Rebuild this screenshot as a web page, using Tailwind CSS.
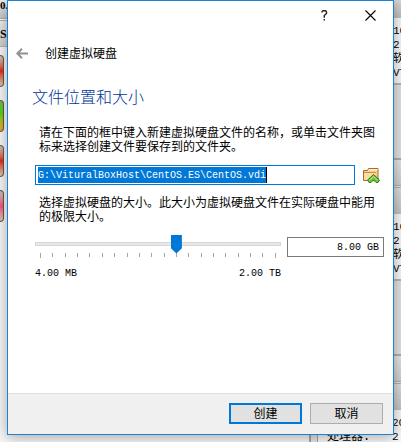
<!DOCTYPE html>
<html lang="zh-CN">
<head>
<meta charset="utf-8">
<meta name="viewport" content="width=device-width, initial-scale=1">
<title>创建虚拟硬盘</title>
<script src="https://cdn.jsdelivr.net/npm/@tailwindcss/browser@4"></script>
</head>
<body class="relative flex min-h-screen overflow-hidden bg-[#f8f8f8] text-xs leading-[14px] text-black font-['Liberation_Sans','Noto_Sans_CJK_SC',sans-serif]">

<!-- Manager window behind the dialog -->
<div class="absolute inset-0 flex justify-between overflow-hidden" aria-hidden="true">
  <div class="flex w-10 flex-col">
    <div class="h-[18px] overflow-hidden bg-linear-to-b from-[#f0f0f0] to-[#c8c8c8] font-['Liberation_Serif'] text-[11px] font-bold leading-[10px]"><span>0.</span></div>
    <div class="h-[3px] border-y border-[#b0b0b0] bg-white"></div>
    <div class="mb-2 h-[26px] border-b border-[#b8b8b8] bg-linear-to-b from-[#f0f0f0] to-[#d0d0d0] pt-1.5 font-['Liberation_Serif'] font-bold">Sn</div>
    <div class="flex flex-col gap-[13px]">
      <div class="h-8 w-1 rounded-r-sm border-y border-r border-[#605850] bg-linear-to-b from-[#c8beb0] from-5% via-[#e02008] via-50% to-[#d8c8b0]"></div>
      <div class="h-8 w-1 rounded-r-sm border-y border-r border-[#605850] bg-linear-to-b from-[#70c040] via-[#48d810] via-40% to-[#f0a030]"></div>
      <div class="h-8 w-1 rounded-r-sm border-y border-r border-[#605850] bg-linear-to-b from-[#c8beb0] from-5% via-[#e02008] via-50% to-[#d8c8b0]"></div>
      <div class="h-8 w-1 rounded-r-sm border-y border-r border-[#605850] bg-linear-to-b from-[#c8beb0] from-5% via-[#f85080] via-50% to-[#d8c8b0]"></div>
    </div>
  </div>
  <div class="flex w-[92px] flex-col border-l-2 border-[#a8a8a8] bg-[#e8e8e8] pl-1.5 font-['Liberation_Mono','Noto_Sans_CJK_SC',monospace]">
    <div class="flex flex-1 flex-col border-l border-[#a8a8a8] bg-[#e4e4e4]">
      <div class="h-[18px] bg-linear-to-b from-[#d8d8d8] to-[#c0c0c0]"></div>
      <div class="h-[67px] overflow-hidden border-b-2 border-[#b8b8b8] bg-[#fafafa] pl-[75px] pt-1.5 text-[11px] whitespace-nowrap"><p>10</p><p>2</p><p>软</p><p>VT</p></div>
      <div class="h-[73px]"></div>
      <div class="h-[27px] border-t-2 border-[#b0b0b0] bg-linear-to-b from-[#e8e8e8] to-[#d0d0d0]"></div>
      <div class="h-[3px] border-y border-[#b0b0b0] bg-[#e8e8e8]"></div>
      <div class="h-[26px] bg-linear-to-b from-[#e0e0e0] to-[#c4c4c4]"></div>
      <div class="h-[67px] overflow-hidden border-b-2 border-[#b8b8b8] bg-[#fafafa] pl-[75px] pt-1.5 text-[11px] whitespace-nowrap"><p>10</p><p>2</p><p>软</p><p>VT</p></div>
      <div class="h-[73px]"></div>
      <div class="h-[27px] border-t-2 border-[#b0b0b0] bg-linear-to-b from-[#e8e8e8] to-[#d0d0d0]"></div>
      <div class="h-[3px] border-y border-[#b0b0b0] bg-[#e8e8e8]"></div>
      <div class="h-[26px] bg-linear-to-b from-[#e0e0e0] to-[#c4c4c4]"></div>
      <div class="grid flex-1 grid-cols-[65px_1fr] content-start overflow-hidden bg-[#fafafa] pl-[9px] pt-1.5 whitespace-nowrap"><span class="col-start-2 text-[11px]">20</span><span>处理器:</span><span class="text-[11px]">2</span></div>
    </div>
  </div>
</div>

<main role="dialog" aria-labelledby="wizard-title" class="relative mx-[7px] mb-[7px] flex flex-1 flex-col border border-[#1883d7] bg-white shadow-[0_2px_14px_rgba(0,0,0,0.35)]">
  <header>
    <div class="flex h-[29px] justify-end">
      <button type="button" aria-label="帮助" class="grid w-[46px] place-items-center">
        <svg width="7" height="11" viewBox="0 0 7 11" fill="none" stroke="#222" stroke-width="1.4"><path d="M1 2.500V1.500L2 .8h2.500l1 .9v1.800L3.300 5.500v2.200M3.300 9v1.500"/></svg>
      </button>
      <button type="button" aria-label="关闭" class="grid w-[46px] place-items-center">
        <svg width="11" height="11" viewBox="0 0 11 11" fill="none" stroke="#000" stroke-width="1.1"><path d="M.5.5l10 10M10.500.5l-10 10"/></svg>
      </button>
    </div>
    <div class="flex h-[48px] items-center gap-4 pl-2">
      <button type="button" aria-label="返回">
        <svg width="13" height="12" viewBox="0 0 13 12" fill="none" stroke="#929292" stroke-width="2"><path d="M12 5.500H1.500M6 .8L1.300 5.500 6 10.200"/></svg>
      </button>
      <h1 id="wizard-title">创建虚拟硬盘</h1>
    </div>
  </header>

  <form id="disk-form" class="flex-1 pr-[9px] pl-[27px]">
    <h2 class="-ml-[3px] pt-1 text-base leading-8 font-light text-[#003399]">文件位置和大小</h2>

    <label for="path" class="mt-3 block pl-1">请在下面的框中键入新建虚拟硬盘文件的名称，或单击文件夹图标来选择创建文件要保存到的文件夹。</label>
    <div class="mt-[11px] flex items-center gap-2 pr-1">
      <div class="flex h-5 min-w-0 flex-1 items-center border border-[#0078d7] px-0.5">
        <input id="path" type="text" value="G:\VituralBoxHost\CentOS.ES\CentOS.vdi" class="field-sizing-content h-4 max-w-full border-r border-black bg-[#0078d7] font-['Liberation_Mono'] text-[10px] text-white outline-none">
      </div>
      <button type="button" aria-label="选择文件夹" class="size-[17px]">
        <svg width="17" height="17" viewBox="0 0 17 17">
          <path d="M.5 13.500V3.500h4l1-2h9.500v12z" fill="#f6cf8e" stroke="#b0682c"/>
          <path d="M6 2h8.500v1.500H5.300z" fill="#fff4d8"/>
          <path d="M1 5.500h11.500L11 13H1z" fill="#fbdca6"/>
          <path d="M1 5.500h12" stroke="#d98c3c"/>
          <path d="M14.500 3v6" stroke="#e39a48"/>
          <path d="M10.500 7.500l6 5.500-1.500 2.500h-2L10.500 13 8 15.500H6L4.500 13z" fill="#70c43c" stroke="#2b7a1e"/>
          <path d="M10.500 9.500l4 3.700M10.500 9.500l-4 3.700" stroke="#b8ee88"/>
        </svg>
      </button>
    </div>

    <label for="size" class="mt-[11px] block pl-1">选择虚拟硬盘的大小。此大小为虚拟硬盘文件在实际硬盘中能用的极限大小。</label>
    <div class="mt-2.5 flex items-start gap-1.5 font-['Liberation_Mono'] text-[10px]">
      <div class="min-w-0 flex-1">
        <input id="size" type="range" min="0" max="19" step="1" value="11" class="block h-[19px] w-full appearance-none bg-transparent [&::-webkit-slider-runnable-track]:h-1 [&::-webkit-slider-runnable-track]:border [&::-webkit-slider-runnable-track]:border-[#d6d6d6] [&::-webkit-slider-runnable-track]:bg-[#e7eaea] [&::-webkit-slider-thumb]:-mt-2 [&::-webkit-slider-thumb]:h-[19px] [&::-webkit-slider-thumb]:w-[11px] [&::-webkit-slider-thumb]:appearance-none [&::-webkit-slider-thumb]:bg-[#0078d7] [&::-webkit-slider-thumb]:[clip-path:polygon(0_0,100%_0,100%_72%,50%_100%,0_72%)]">
        <div class="flex h-[5px] justify-between px-[5px] *:h-1 *:w-px *:bg-[#a5a598] *:first:h-[5px] *:last:h-[5px]" aria-hidden="true">
          <i></i><i></i><i></i><i></i><i></i><i></i><i></i><i></i><i></i><i></i><i></i><i></i><i></i><i></i><i></i><i></i><i></i><i></i><i></i><i></i>
        </div>
        <div class="mt-[9px] flex justify-between"><span>4.00 MB</span><span>2.00 TB</span></div>
      </div>
      <input type="text" aria-label="虚拟硬盘大小" value="8.00 GB" class="mt-[3px] h-5 w-[97px] border border-[#7a7a7a] bg-white pr-1 text-right">
    </div>
  </form>

  <footer class="flex justify-end gap-2 border-t border-[#dfdfdf] bg-[#f0f0f0] pt-[9px] pb-2.5 pr-2.5">
    <button type="submit" form="disk-form" class="h-[21px] w-[73px] border-2 border-[#0078d7] bg-[#e1e1e1]">创建</button>
    <button type="button" class="h-[21px] w-[73px] border border-[#adadad] bg-[#e1e1e1]">取消</button>
  </footer>
</main>
</body>
</html>
